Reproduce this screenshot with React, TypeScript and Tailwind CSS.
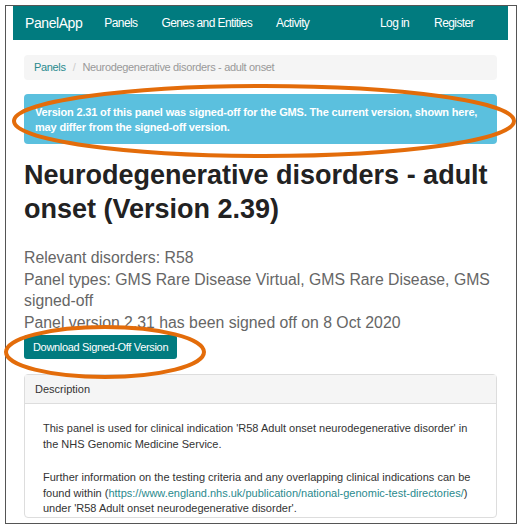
import React from "react";

const navLinks = [
  { label: "Panels", className: "ml-[22px]" },
  { label: "Genes and Entities", className: "ml-[24px]" },
  { label: "Activity", className: "ml-[24px]" },
];

function Annotations() {
  return (
    <svg
      className="pointer-events-none absolute left-0 top-0"
      width="523"
      height="530"
      viewBox="0 0 523 530"
    >
      <ellipse
        cx="264"
        cy="121"
        rx="250"
        ry="35"
        fill="none"
        stroke="#e36c0a"
        strokeWidth="4"
      />
      <ellipse
        cx="105"
        cy="352"
        rx="99"
        ry="25"
        fill="none"
        stroke="#e36c0a"
        strokeWidth="4"
      />
    </svg>
  );
}

export default function App() {
  return (
    <div className="relative h-[530px] w-[523px] overflow-hidden bg-white font-['Liberation_Sans',Arial,sans-serif]">
      <div className="ml-[5px] mt-[5px] h-[519px] w-[512px] overflow-hidden border border-[#555] pl-[7px] pr-[8px]">
        {/* navbar */}
        <nav className="flex h-[34px] items-center bg-[#017b7f] text-white">
          <span className="ml-[12px] text-[14px] tracking-[-0.03em]">PanelApp</span>
          {navLinks.map((link) => (
            <span
              key={link.label}
              className={`${link.className} text-[12px] tracking-[-0.05em]`}
            >
              {link.label}
            </span>
          ))}
          <span className="ml-auto text-[12px] tracking-[-0.05em]">Log in</span>
          <span className="ml-[25px] mr-[34px] text-[12px] tracking-[-0.05em]">
            Register
          </span>
        </nav>

        <div className="px-[11px]">
          {/* breadcrumb */}
          <div className="mt-[15px] flex h-[25px] items-center rounded bg-[#f5f5f5] px-[10px] text-[11px] tracking-[-0.03em]">
            <span className="text-[#2a8a8e]">Panels</span>
            <span className="mx-[7px] text-[#ccc]">/</span>
            <span className="text-[#999]">
              Neurodegenerative disorders - adult onset
            </span>
          </div>

          {/* signed-off alert */}
          <div className="mt-[14px] h-[50px] rounded bg-[#5bc0de] px-[11px] pt-[11px] text-[11px] font-bold leading-[15px] tracking-[-0.015em] text-white">
            Version 2.31 of this panel was signed-off for the GMS. The current
            version, shown here, may differ from the signed-off version.
          </div>

          <h1 className="mt-[14px] text-[27px] font-bold leading-[34px] text-[#222]">
            Neurodegenerative disorders - adult onset (Version 2.39)
          </h1>

          <div className="mt-[21px] text-[15.8px] leading-[21.5px] text-[#666]">
            <p>Relevant disorders: R58</p>
            <p>
              Panel types: GMS Rare Disease Virtual, GMS Rare Disease, GMS
              signed-off
            </p>
            <p>Panel version 2.31 has been signed off on 8 Oct 2020</p>
          </div>

          <button className="mt-[2px] h-[24px] rounded-[3px] bg-[#017b7f] px-[9px] text-[11px] tracking-[-0.03em] text-white">
            Download Signed-Off Version
          </button>

          {/* description panel */}
          <div className="mt-[15px] rounded border border-[#ddd]">
            <div className="flex h-[29px] items-center border-b border-[#ddd] bg-[#f5f5f5] px-[10px] text-[11px] text-[#333]">
              Description
            </div>
            <div className="px-[18px] pt-[17px] text-[11px] leading-[15.5px] text-[#333]">
              <p>
                This panel is used for clinical indication 'R58 Adult onset
                neurodegenerative disorder' in the NHS Genomic Medicine
                Service.
              </p>
              <p className="mt-[18px]">
                Further information on the testing criteria and any overlapping
                clinical indications can be found within (
                <span className="text-[#2a8a8e]">
                  https://www.england.nhs.uk/publication/national-genomic-test-directories/
                </span>
                ) under 'R58 Adult onset neurodegenerative disorder'.
              </p>
            </div>
          </div>
        </div>
      </div>
      <Annotations />
    </div>
  );
}
